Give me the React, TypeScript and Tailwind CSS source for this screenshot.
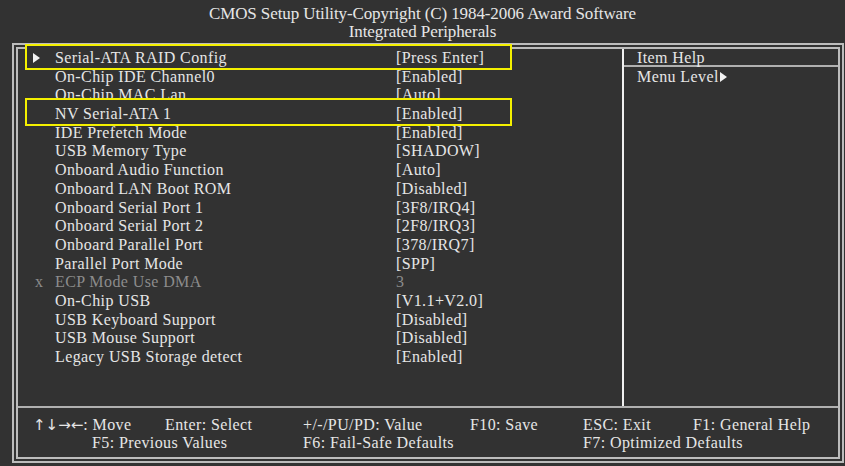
import React from 'react';

type Row = { label: string; value: string; mark?: 'arrow' | 'x'; boxed?: 'first' | 'second'; dim?: boolean };

const rows: Row[] = [
  { label: 'Serial-ATA RAID Config', value: '[Press Enter]', mark: 'arrow', boxed: 'first' },
  { label: 'On-Chip IDE Channel0', value: '[Enabled]' },
  { label: 'On-Chip MAC Lan', value: '[Auto]' },
  { label: 'NV Serial-ATA 1', value: '[Enabled]', boxed: 'second' },
  { label: 'IDE Prefetch Mode', value: '[Enabled]' },
  { label: 'USB Memory Type', value: '[SHADOW]' },
  { label: 'Onboard Audio Function', value: '[Auto]' },
  { label: 'Onboard LAN Boot ROM', value: '[Disabled]' },
  { label: 'Onboard Serial Port 1', value: '[3F8/IRQ4]' },
  { label: 'Onboard Serial Port 2', value: '[2F8/IRQ3]' },
  { label: 'Onboard Parallel Port', value: '[378/IRQ7]' },
  { label: 'Parallel Port Mode', value: '[SPP]' },
  { label: 'ECP Mode Use DMA', value: '3', mark: 'x', dim: true },
  { label: 'On-Chip USB', value: '[V1.1+V2.0]' },
  { label: 'USB Keyboard Support', value: '[Disabled]' },
  { label: 'USB Mouse Support', value: '[Disabled]' },
  { label: 'Legacy USB Storage detect', value: '[Enabled]' },
];

function Tri({ className = '' }: { className?: string }) {
  return (
    <svg width="7" height="10" viewBox="0 0 7 10" className={className}>
      <polygon points="0,0 7,5 0,10" fill="#f2f2f2" />
    </svg>
  );
}

function RowLine({ row }: { row: Row }) {
  return (
    <div className={`flex h-[18.69px] items-center leading-[18.69px] ${row.dim ? 'text-[#8c8c8c]' : ''}`}>
      <span className="w-[22px] flex items-center">
        {row.mark === 'arrow' && <Tri />}
        {row.mark === 'x' && <span className="pl-[2px]">x</span>}
      </span>
      <span className="w-[341px] whitespace-nowrap">{row.label}</span>
      <span className="whitespace-nowrap">{row.value}</span>
    </div>
  );
}

export default function App() {
  return (
    <div className="w-[845px] h-[466px] overflow-hidden bg-[#323232] text-[#e6e6e6] font-['Liberation_Serif',serif] tracking-[0.4px] text-[16px]">
      {/* title */}
      <div className="h-[43px] pt-[5px] flex flex-col items-center text-[17px] leading-[18px] tracking-[-0.1px]">
        <div>CMOS Setup Utility-Copyright (C) 1984-2006 Award Software</div>
        <div>Integrated Peripherals</div>
      </div>

      <div className="ml-[12px] w-[832px] h-[420px] border-2 border-[#bcbcbc] p-[2px]">
        <div className="h-full border-2 border-[#bcbcbc] flex flex-col">
          <div className="h-[359px] border-b-2 border-[#b0b0b0] flex">
            {/* settings list */}
            <div className="w-[604px]">
              {rows.map((row) =>
                row.boxed === 'first' ? (
                  <div key={row.label} className="relative ml-[7px] w-[487px] -mt-[5px] -mb-[2px] pt-[3px] border-2 border-[#f4f000] bg-[#323232]">
                    <div className="pl-[6px]"><RowLine row={row} /></div>
                  </div>
                ) : row.boxed === 'second' ? (
                  <div key={row.label} className="relative ml-[7px] w-[487px] -mt-[7px] -mb-[2px] pt-[5px] border-2 border-[#f4f000] bg-[#323232]">
                    <div className="pl-[6px]"><RowLine row={row} /></div>
                  </div>
                ) : (
                  <div key={row.label} className="pl-[15px]"><RowLine row={row} /></div>
                )
              )}
            </div>
            <div className="w-[2px] bg-[#f0f0f0]" />
            {/* item help */}
            <div className="flex-1">
              <div className="h-[18px] leading-[18px] pl-[13px] border-b-2 border-[#b0b0b0]">Item Help</div>
              <div className="pl-[13px] leading-[19px] flex items-center">
                Menu Level<Tri className="ml-[1px]" />
              </div>
            </div>
          </div>

          {/* key legend */}
          <div className="pt-[8px] leading-[18px] whitespace-nowrap">
            <div className="flex pl-[15px]">
              <span className="w-[132px]"><span className="font-['DejaVu_Sans',sans-serif] text-[15px] tracking-[0px]">↑↓→←</span>: Move</span>
              <span className="w-[138px]">Enter: Select</span>
              <span className="w-[167px]">+/-/PU/PD: Value</span>
              <span className="w-[113px]">F10: Save</span>
              <span className="w-[110px]">ESC: Exit</span>
              <span>F1: General Help</span>
            </div>
            <div className="flex pl-[74px]">
              <span className="w-[211px]">F5: Previous Values</span>
              <span className="w-[280px]">F6: Fail-Safe Defaults</span>
              <span>F7: Optimized Defaults</span>
            </div>
          </div>
        </div>
      </div>
    </div>
  );
}
